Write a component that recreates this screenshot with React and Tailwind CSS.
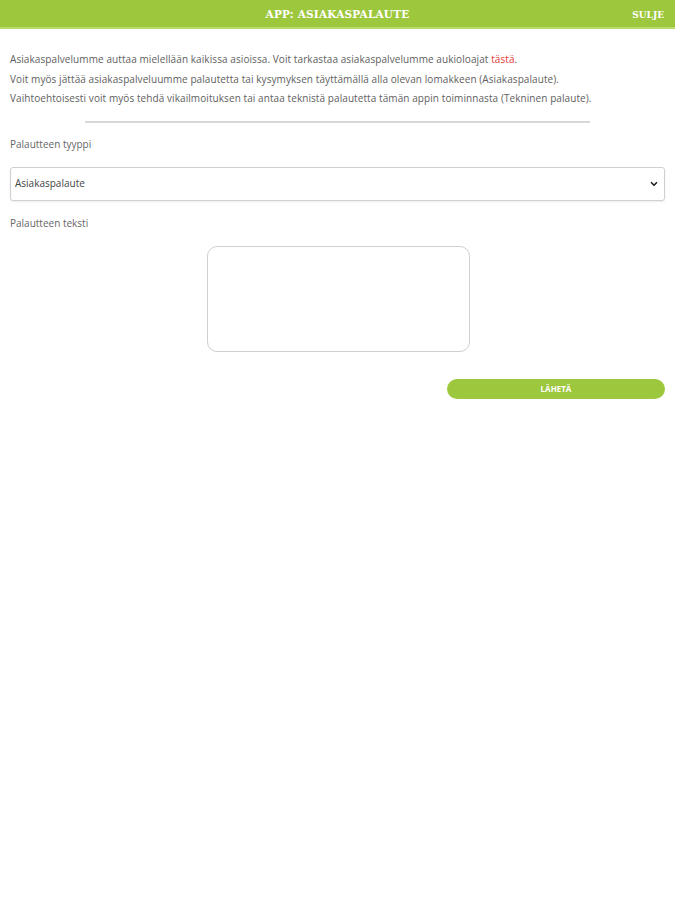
import { ChevronDown } from 'lucide-react'

export default function App() {
  return (
    <div className="min-h-screen bg-white font-['Open_Sans',sans-serif] text-[#606060]">
      <header className="h-[29px] bg-[#9dc73c] border-b-2 border-[#b9dc6a] flex items-center relative">
        <h1 className="flex-1 text-center text-white text-[10.5px] font-bold tracking-[0.2px] font-['DejaVu_Serif',serif] pt-[3px]">
          APP: ASIAKASPALAUTE
        </h1>
        <button className="absolute right-[11px] top-[9px] text-white text-[9px] font-bold font-['DejaVu_Serif',serif]">
          SULJE
        </button>
      </header>

      <main className="px-[10px] pt-[21px]">
        <div className="text-[10px] leading-[19.5px] tracking-[0.08px]">
          <p>
            Asiakaspalvelumme auttaa mielellään kaikissa asioissa. Voit tarkastaa asiakaspalvelumme aukioloajat{' '}
            <a className="text-[#e53935]">tästä</a>.
          </p>
          <p>Voit myös jättää asiakaspalveluumme palautetta tai kysymyksen täyttämällä alla olevan lomakkeen (Asiakaspalaute).</p>
          <p>Vaihtoehtoisesti voit myös tehdä vikailmoituksen tai antaa teknistä palautetta tämän appin toiminnasta (Tekninen palaute).</p>
        </div>

        <hr className="mx-[75px] mt-[12px] border-t-2 border-[#d8d8d8]" />

        <label className="block text-[10px] mt-[14px] text-[#666]">Palautteen tyyppi</label>
        <div className="mt-[15px] h-[34px] border border-[#d0d0d0] rounded-[3px] shadow-[0_1px_2px_rgba(0,0,0,0.08)] flex items-center justify-between pl-[4px] pr-[5px] text-[10px] text-[#444]">
          <span>Asiakaspalaute</span>
          <ChevronDown size={10} strokeWidth={4} className="text-[#222]" />
        </div>

        <label className="block text-[10px] mt-[15px] text-[#666]">Palautteen teksti</label>
        <div className="flex justify-center mt-[15px] pl-[2px]">
          <textarea className="w-[263px] h-[106px] border border-[#d0d0d0] rounded-[10px] resize-none outline-none" />
        </div>

        <div className="flex justify-end mt-[27px]">
          <button className="w-[218px] h-[20px] rounded-full bg-[#9dc73c] text-white text-[8px] font-bold">
            LÄHETÄ
          </button>
        </div>
      </main>
    </div>
  )
}
